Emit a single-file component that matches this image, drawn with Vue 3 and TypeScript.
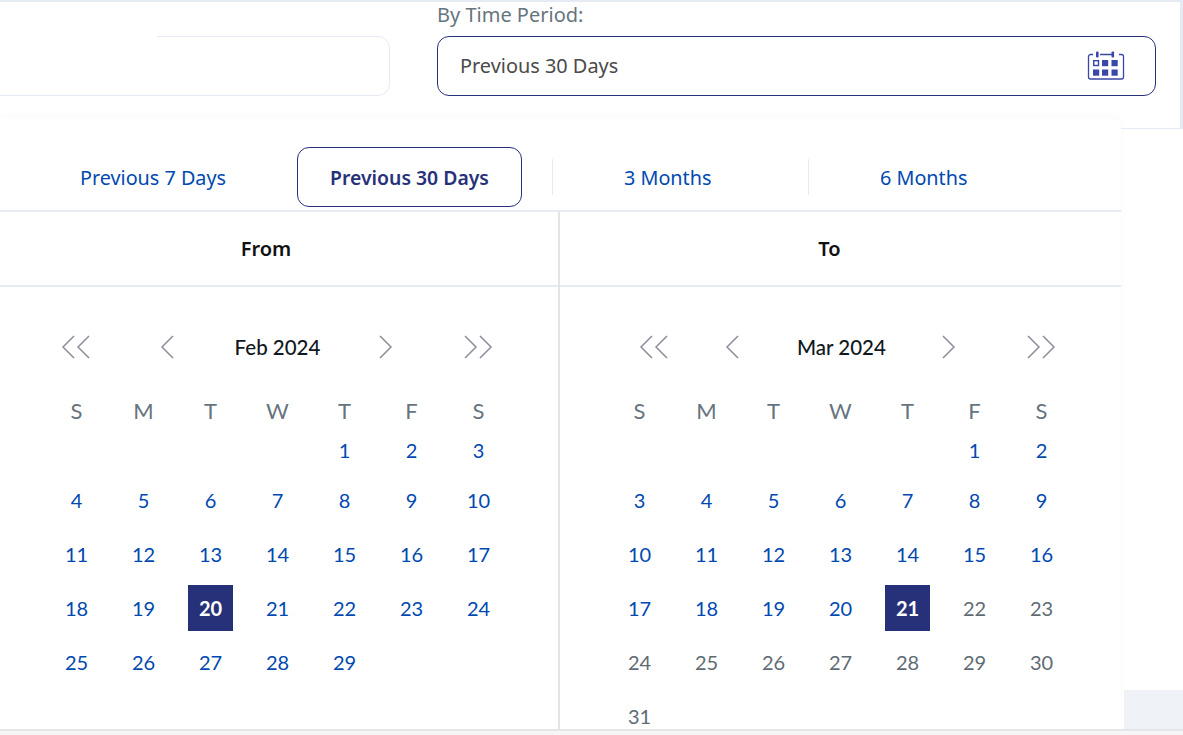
<script setup lang="ts">
interface Day { n: number; muted?: boolean; selected?: boolean }
interface Cal { title: string; cls: string; weeks: (Day | null)[][] }

function build(first: number, last: number, selected: number, activeUntil: number): (Day | null)[][] {
  const weeks: (Day | null)[][] = []
  let week: (Day | null)[] = Array(first).fill(null)
  for (let n = 1; n <= last; n++) {
    week.push({ n, selected: n === selected, muted: n > activeUntil })
    if (week.length === 7) { weeks.push(week); week = [] }
  }
  if (week.length) { while (week.length < 7) week.push(null); weeks.push(week) }
  return weeks
}

const labels = ['S', 'M', 'T', 'W', 'T', 'F', 'S']
const calendars: Cal[] = [
  { title: 'Feb 2024', cls: 'feb', weeks: build(4, 29, 20, 99) },
  { title: 'Mar 2024', cls: 'mar', weeks: build(5, 31, 21, 21) },
]
</script>

<template>
  <div class="page">
    <section class="filters">
      <div class="field field-left">
        <div class="input input-plain"></div>
      </div>
      <div class="field field-right">
        <label class="label">By Time Period:</label>
        <div class="input input-active">
          <span class="value">Previous 30 Days</span>
          <svg class="cal-icon" width="38" height="30" viewBox="0 0 38 30" fill="none">
            <path d="M6 3.5H3.5A2 2 0 0 0 1.500 5.500V26A2 2 0 0 0 3.500 28H34.500A2 2 0 0 0 36.500 26V5.500A2 2 0 0 0 34.500 3.500H32M13 3.500H25" stroke="#3947a8" stroke-width="1.300"/>
            <rect x="9" y="0.500" width="2.600" height="6" rx="1" fill="#3947a8"/>
            <rect x="24.500" y="0.500" width="2.600" height="6" rx="1" fill="#3947a8"/>
            <rect x="6.700" y="9.700" width="4.800" height="4.800" stroke="#3947a8" stroke-width="1.400"/>
            <rect x="15" y="9" width="6.200" height="6.200" fill="#3947a8"/>
            <rect x="24.500" y="9" width="6.200" height="6.200" fill="#3947a8"/>
            <rect x="6" y="18.500" width="6.200" height="6.200" fill="#3947a8"/>
            <rect x="15" y="18.500" width="6.200" height="6.200" fill="#3947a8"/>
            <rect x="24.500" y="18.500" width="6.200" height="6.200" fill="#3947a8"/>
          </svg>
        </div>
      </div>
    </section>

    <main class="middle">
      <div class="side-block"></div>
    </main>
    <footer class="foot"></footer>

    <div class="popup">
      <div class="tabs">
        <button class="tab tab-first">Previous 7 Days</button>
        <button class="tab tab-active">Previous 30 Days</button>
        <button class="tab tab-div tab-third">3 Months</button>
        <button class="tab tab-div">6 Months</button>
      </div>
      <div class="heads">
        <div class="head head-from">From</div>
        <div class="head head-to">To</div>
      </div>
      <div class="panels">
        <div v-for="cal in calendars" :key="cal.title" class="panel" :class="cal.cls">
          <div class="nav">
            <svg class="dbl first" width="32" height="26" viewBox="0 0 32 26" fill="none">
              <path d="M14 2L3 13L14 24M29 2L18 13L29 24" stroke="#8b8e9b" stroke-width="1.500"/>
            </svg>
            <svg class="sgl prev" width="16" height="26" viewBox="0 0 16 26" fill="none">
              <path d="M14 2L3 13L14 24" stroke="#8b8e9b" stroke-width="1.500"/>
            </svg>
            <span class="month">{{ cal.title }}</span>
            <svg class="sgl next" width="16" height="26" viewBox="0 0 16 26" fill="none">
              <path d="M2 2L13 13L2 24" stroke="#8b8e9b" stroke-width="1.500"/>
            </svg>
            <svg class="dbl last" width="32" height="26" viewBox="0 0 32 26" fill="none">
              <path d="M3 2L14 13L3 24M18 2L29 13L18 24" stroke="#8b8e9b" stroke-width="1.500"/>
            </svg>
          </div>
          <div class="labels">
            <span v-for="(l, i) in labels" :key="i">{{ l }}</span>
          </div>
          <div v-for="(week, w) in cal.weeks" :key="w" class="week">
            <div v-for="(d, i) in week" :key="i" class="cell">
              <span
                v-if="d"
                class="day"
                :class="{ muted: d.muted, selected: d.selected }"
              >{{ d.n }}</span>
            </div>
          </div>
        </div>
      </div>
    </div>
  </div>
</template>

<style>
html, body { margin: 0; background: #fff; }
</style>

<style scoped>
.page {
  position: relative;
  width: 1183px;
  height: 735px;
  overflow: hidden;
  background: #fff;
  display: flex;
  flex-direction: column;
  font-family: "Noto Sans", sans-serif;
}
.filters {
  box-sizing: border-box;
  height: 129px;
  border-top: 2px solid #e6eaf3;
  border-right: 3px solid #e6eaf3;
  border-bottom: 1px solid #e6eaf3;
  display: flex;
  gap: 47px;
}
.field { display: flex; flex-direction: column; justify-content: flex-end; height: 94px; }
.field-left { width: 390px; position: relative; }
.field-left::after {
  content: "";
  position: absolute;
  left: 0;
  bottom: 58px;
  width: 157px;
  height: 3px;
  background: #fff;
}
.field-right { width: 719px; }
.label {
  font-size: 20px;
  line-height: 24px;
  color: #66747e;
  height: 33px;
  margin-top: -4px;
}
.input {
  box-sizing: border-box;
  height: 60px;
  border-radius: 12px;
  display: flex;
  align-items: center;
  justify-content: space-between;
}
.input-plain { border: 1px solid #e6eaf3; margin-left: -30px; }
.input-active {
  border: 1px solid #27317a;
  padding: 0 30px 0 22px;
  font-size: 19.9px;
  color: #4a4a4a;
}
.value { margin-top: -2px; }
.middle { flex: 1; display: flex; justify-content: flex-end; align-items: flex-end; }
.side-block { width: 59px; height: 39px; background: #eff2f6; }
.foot { height: 6px; box-sizing: border-box; border-top: 2px solid #e4e5e8; background: #f6f6f6; }

.popup {
  position: absolute;
  left: 0;
  top: 119px;
  width: 1121px;
  height: 610px;
  background: #fff;
  border-top-right-radius: 8px;
  box-shadow: 0 -4px 8px rgba(0, 0, 0, 0.018);
  overflow: hidden;
}
.tabs {
  box-sizing: border-box;
  height: 93px;
  border-bottom: 2px solid #e6eaf3;
  display: flex;
  align-items: flex-start;
  padding-top: 28px;
}
.tab {
  font: inherit;
  font-size: 19.8px;
  color: #0049b0;
  background: none;
  border: 0;
  padding: 0;
  height: 60px;
  text-align: left;
}
.tab-first { width: 297px; padding-left: 80px; }
.tab-active {
  box-sizing: border-box;
  width: 225px;
  border: 1px solid #27317a;
  border-radius: 12px;
  color: #27317a;
  font-size: 19.4px;
  font-weight: 600;
  text-align: center;
}
.tab-div {
  box-sizing: border-box;
  width: 256px;
  height: 36px;
  margin-top: 12px;
  border-left: 1px solid #e6eaf3;
  padding-left: 71px;
}
.tab-third { margin-left: 30px; }
.heads {
  box-sizing: border-box;
  height: 75px;
  border-bottom: 2px solid #e6eaf3;
  display: flex;
}
.head {
  display: flex;
  align-items: center;
  justify-content: center;
  font-size: 20px;
  font-weight: 600;
  color: #111;
}
.head-from { width: 558px; padding-right: 26px; box-sizing: border-box; }
.head-to { flex: 1; margin-left: 2px; padding-right: 22px; }
.heads, .panels { position: relative; }
.heads::after {
  content: "";
  position: absolute;
  left: 558px;
  top: 0;
  bottom: -2px;
  width: 2px;
  background: #e3e4e8;
}
.panels { display: flex; font-family: Lato, sans-serif; }
.panel { box-sizing: border-box; padding-top: 46px; height: 450px; }
.feb { width: 560px; padding-left: 43px; border-right: 2px solid #e3e4e8; }
.mar { flex: 1; padding-left: 46px; }
.nav { display: flex; align-items: center; height: 28px; }
.feb .nav { margin-left: 17px; }
.mar .nav { margin-left: 32px; }
.feb .prev { margin-left: 67px; }
.mar .prev { margin-left: 54px; }
.month {
  width: 87px;
  margin: -1px 57px 0 57px;
  text-align: center;
  font-size: 20.500px;
  font-weight: 500;
  color: #111820;
  white-space: nowrap;
}
.feb .month { margin-left: 59px; }
.last { margin-left: 68px; }
.labels {
  display: grid;
  grid-template-columns: repeat(7, 67px);
  margin-top: 27px;
  height: 44px;
  align-items: center;
  justify-items: center;
  font-size: 22px;
  color: #66747e;
}
.week {
  display: grid;
  grid-template-columns: repeat(7, 67px);
  grid-template-rows: 100%;
  height: 54px;
  align-items: center;
}
.labels + .week { height: 36px; margin-bottom: 5px; }
.cell { display: flex; justify-content: center; align-items: center; height: 100%; min-height: 0; }
.day {
  flex: none;
  width: 45px;
  height: 45px;
  display: flex;
  align-items: center;
  justify-content: center;
  font-size: 20px;
  color: #0049b0;
}
.day.muted { color: #5f6b73; }
.day.selected {
  box-sizing: border-box;
  height: 46px;
  padding-top: 1px;
  margin-top: -1px;
  background: #27317a;
  color: #fff;
  font-weight: 700;
}
</style>
